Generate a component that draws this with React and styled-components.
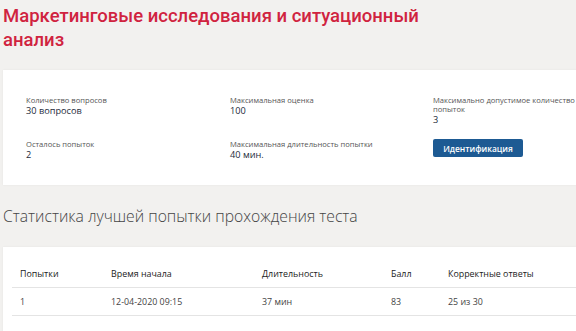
import styled, { createGlobalStyle } from "styled-components";

const GlobalStyle = createGlobalStyle`
  html, body {
    margin: 0;
    padding: 0;
    background: #f2f1ef;
    font-family: "Open Sans", "Liberation Sans", sans-serif;
  }
`;

const Page = styled.div`
  width: 576px;
  height: 331px;
  overflow: hidden;
  padding-left: 3px;
  box-sizing: border-box;
`;

const Title = styled.h1`
  margin: 0;
  padding-top: 4px;
  font-family: Roboto, "Open Sans", sans-serif;
  font-weight: 500;
  font-size: 18.5px;
  line-height: 24px;
  color: #d0233f;
  height: 66px;
`;

const Card = styled.section`
  background: #fff;
  width: 620px;
  box-shadow: 0 0 2px rgba(0, 0, 0, 0.06);
`;

const InfoCard = styled(Card)`
  height: 115px;
  padding: 26px 0 0 23px;
  box-sizing: border-box;
  display: grid;
  grid-template-columns: 204px 203px 150px;
  grid-template-rows: 44px 40px;
`;

const Field = styled.div`
  display: flex;
  flex-direction: column;
  align-items: flex-start;
`;

const Label = styled.span`
  font-size: 7.6px;
  line-height: 9px;
  color: #555;
  max-width: 150px;
`;

const Value = styled.span`
  font-size: 9.2px;
  line-height: 11px;
  color: #1e2b3b;
`;

const Button = styled.button`
  margin-top: -1px;
  width: 90px;
  height: 18px;
  border: none;
  border-radius: 2px;
  background: #1d5a93;
  color: #fff;
  font-family: "Open Sans", sans-serif;
  font-weight: 600;
  font-size: 8.4px;
  padding: 0;
`;

const Heading = styled.h2`
  margin: 0;
  padding: 20px 0 0 0;
  height: 62px;
  box-sizing: border-box;
  font-weight: 300;
  font-size: 15.7px;
  line-height: 22px;
  color: #444;
`;

const TableCard = styled(Card)`
  padding: 12px 0 30px 9px;
`;

const Table = styled.table`
  border-collapse: collapse;
  table-layout: fixed;
  width: 600px;
  font-size: 8.9px;

  th, td {
    text-align: left;
    padding: 0 0 0 8px;
    white-space: nowrap;
  }
  th {
    font-weight: 400;
    height: 28px;
    color: #222;
  }
  td {
    height: 27px;
    color: #444;
  }
  tr {
    border-bottom: 1px solid #e4e4e4;
  }
`;

const info = [
  { label: "Количество вопросов", value: "30 вопросов" },
  { label: "Максимальная оценка", value: "100" },
  { label: "Максимально допустимое количество попыток", value: "3" },
  { label: "Осталось попыток", value: "2" },
  { label: "Максимальная длительность попытки", value: "40 мин." },
];

const cols = [
  { title: "Попытки", w: 91 },
  { title: "Время начала", w: 151 },
  { title: "Длительность", w: 129 },
  { title: "Балл", w: 57 },
  { title: "Корректные ответы", w: 172 },
];

const row = ["1", "12-04-2020 09:15", "37 мин", "83", "25 из 30"];

export default function App() {
  return (
    <Page>
      <GlobalStyle />
      <Title>
        Маркетинговые исследования и ситуационный
        <br />
        анализ
      </Title>
      <InfoCard>
        {info.map((f) => (
          <Field key={f.label}>
            <Label>{f.label}</Label>
            <Value>{f.value}</Value>
          </Field>
        ))}
        <Field>
          <Button>Идентификация</Button>
        </Field>
      </InfoCard>
      <Heading>Статистика лучшей попытки прохождения теста</Heading>
      <TableCard>
        <Table>
          <colgroup>
            {cols.map((c) => (
              <col key={c.title} style={{ width: c.w }} />
            ))}
          </colgroup>
          <thead>
            <tr>
              {cols.map((c) => (
                <th key={c.title}>{c.title}</th>
              ))}
            </tr>
          </thead>
          <tbody>
            <tr>
              {row.map((v, i) => (
                <td key={i}>{v}</td>
              ))}
            </tr>
          </tbody>
        </Table>
      </TableCard>
    </Page>
  );
}
